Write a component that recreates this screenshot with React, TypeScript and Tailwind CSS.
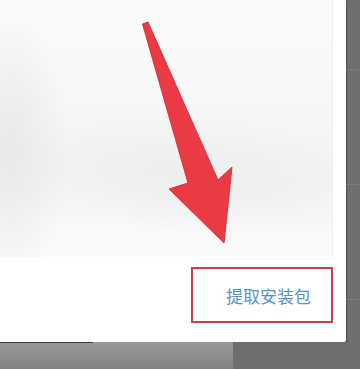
export default function App() {
  return (
    <div className="w-[360px] h-[369px] bg-[#6f6f6f] flex flex-col overflow-hidden">
      <div className="flex h-[342px]">
        <div className="w-[346px] h-full bg-white flex flex-col rounded-br-[2px] shadow-[1px_1px_2px_rgba(0,0,0,0.3)]">
          <div className="relative w-[333px] h-[257px] border-r border-[#ececec] bg-[radial-gradient(ellipse_60px_140px_at_10px_150px,#e9e9e9,transparent),radial-gradient(ellipse_200px_60px_at_170px_170px,#eeeeee,transparent),radial-gradient(ellipse_160px_50px_at_250px_190px,#f1f1f1,transparent),linear-gradient(to_bottom,#fbfbfb,#f5f5f5_60%,#fbfbfb)]">
            <svg
              className="absolute inset-0"
              width="333"
              height="257"
              viewBox="0 0 333 257"
            >
              <polygon
                points="142.5,24 148,22 218,180 232,167 224,243 169,189 188,183"
                fill="#ea3a44"
                stroke="#d8323c"
                strokeWidth="1"
                strokeLinejoin="round"
              />
            </svg>
          </div>
          <div className="flex justify-end pr-[13px] pt-[10px]">
            <div className="w-[142px] h-[56px] border-2 border-[#c8404e] flex items-center justify-end pr-[20px]">
              <span className="text-[17px] leading-none text-[#5494c9] font-['Noto_Sans_CJK_SC','Noto_Sans',sans-serif]">
                提取安装包
              </span>
            </div>
          </div>
        </div>
        <div className="flex-1 flex flex-col">
          <div className="h-[70px] border-b border-[#7a7a7a]" />
          <div className="h-[115px] border-b border-[#7a7a7a]" />
          <div className="h-[115px] border-b border-[#7a7a7a]" />
        </div>
      </div>
      <div className="flex flex-1">
        <div className="w-[233px] flex flex-col bg-[linear-gradient(to_bottom,#9a9a9a,#828282)]">
          <div className="w-[93px] h-px bg-[#3a3a3a]" />
        </div>
        <div className="flex-1 bg-[#6e6e6e]" />
      </div>
    </div>
  );
}
